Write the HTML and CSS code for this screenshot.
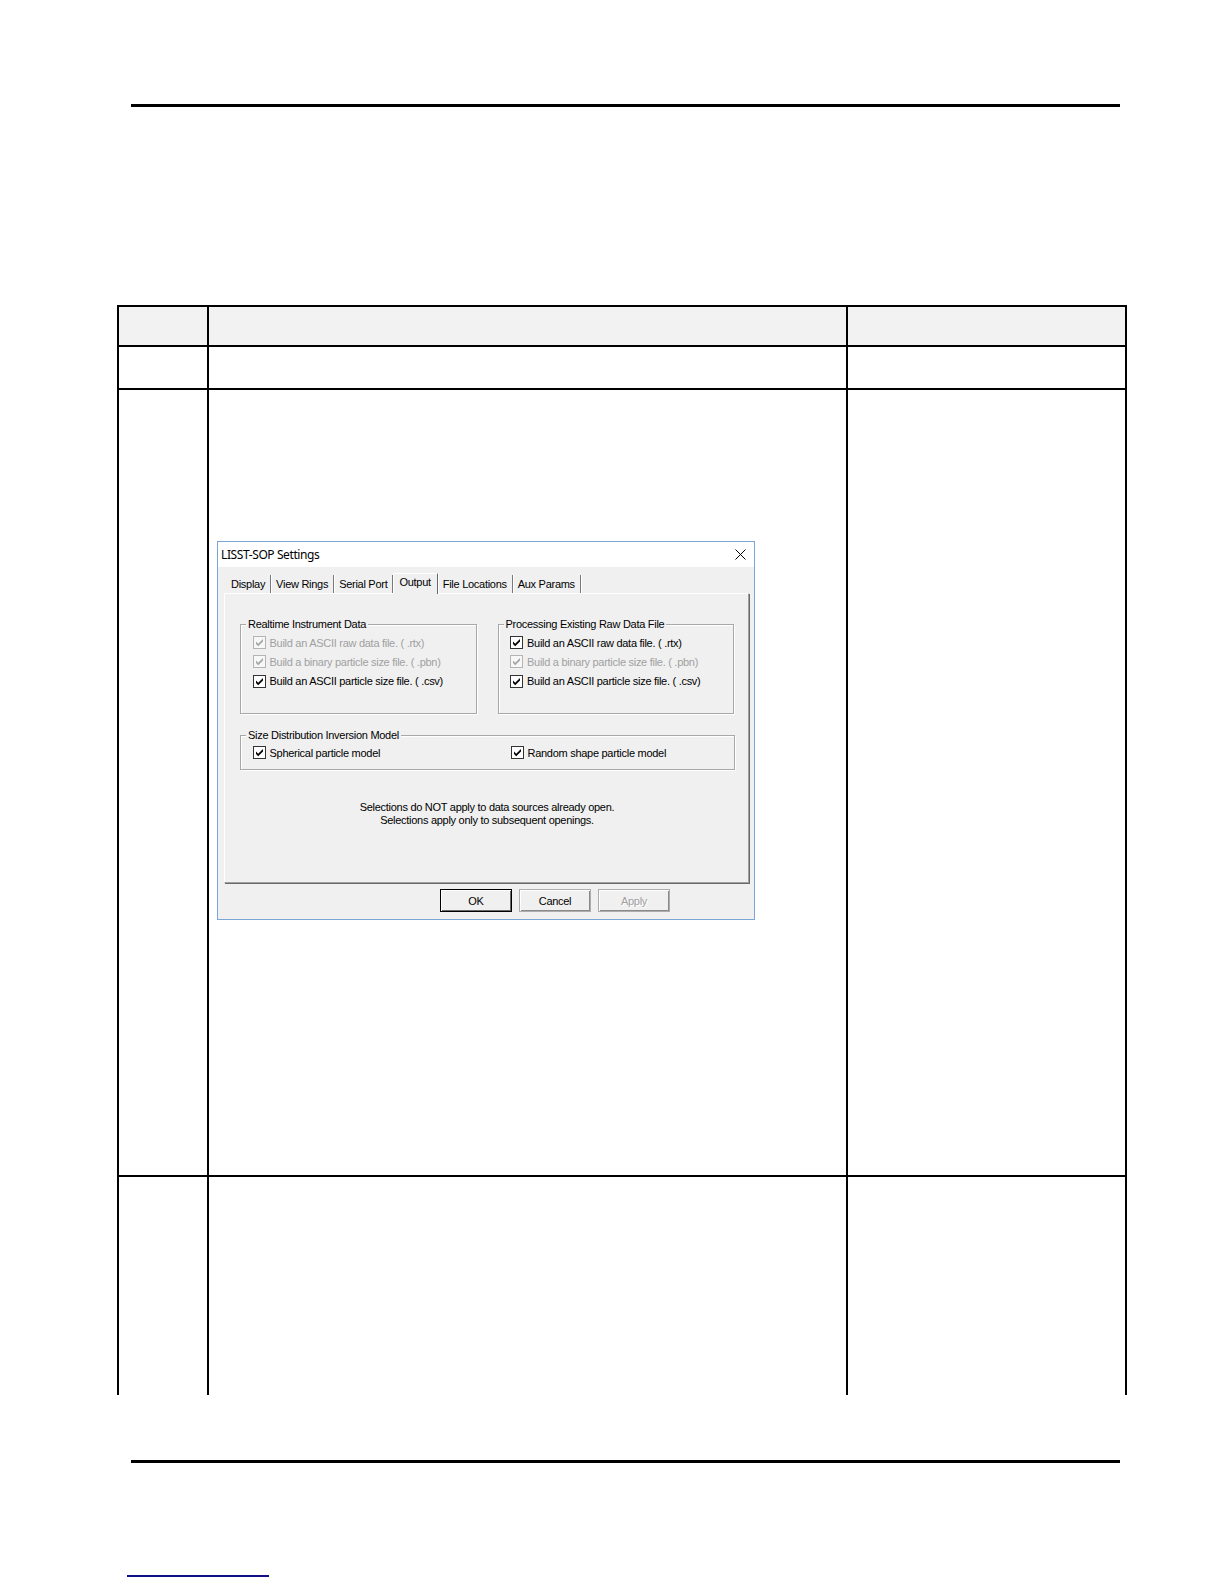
FILE: index.html
```
<!DOCTYPE html>
<html lang="en">
<head>
<meta charset="utf-8">
<title>LISST-SOP Settings – Output tab</title>
<link rel="stylesheet" href="styles.css">
</head>
<body>
<div class="page">
  <div class="rule rule-top"></div>

  <div class="doc-table">
    <div class="cell head"></div><div class="cell head"></div><div class="cell head end"></div>
    <div class="cell"></div><div class="cell"></div><div class="cell end"></div>
    <div class="cell"></div>
    <div class="cell figure-cell">
      <div class="dialog">
        <div class="titlebar">
          <span class="title">LISST-SOP Settings</span>
          <svg class="close" width="11" height="11" viewBox="0 0 11 11"><path d="M0.5 0.5 L10.5 10.5 M10.5 0.5 L0.5 10.5" stroke="#000" stroke-width="1" fill="none"/></svg>
        </div>
        <div class="client">
          <div class="tabs">
            <span class="tab">Display</span>
            <span class="tab">View Rings</span>
            <span class="tab">Serial Port</span>
            <span class="tab active">Output</span>
            <span class="tab">File Locations</span>
            <span class="tab">Aux Params</span>
          </div>
          <div class="panel">
            <div class="group-row">
              <div class="group">
                <div class="legend">Realtime Instrument Data</div>
                <div class="opts">
                  <div class="opt disabled"><svg class="cb" width="13" height="13" viewBox="0 0 13 13"><rect x="0.5" y="0.5" width="12" height="12"/><polygon points="3,5.6 5.2,7.8 10,3 10,5.4 5.2,10.2 3,8"/></svg><span>Build an ASCII raw data file. ( .rtx)</span></div>
                  <div class="opt disabled"><svg class="cb" width="13" height="13" viewBox="0 0 13 13"><rect x="0.5" y="0.5" width="12" height="12"/><polygon points="3,5.6 5.2,7.8 10,3 10,5.4 5.2,10.2 3,8"/></svg><span>Build a binary particle size file. ( .pbn)</span></div>
                  <div class="opt"><svg class="cb" width="13" height="13" viewBox="0 0 13 13"><rect x="0.5" y="0.5" width="12" height="12"/><polygon points="3,5.6 5.2,7.8 10,3 10,5.4 5.2,10.2 3,8"/></svg><span>Build an ASCII particle size file. ( .csv)</span></div>
                </div>
              </div>
              <div class="group">
                <div class="legend">Processing Existing Raw Data File</div>
                <div class="opts">
                  <div class="opt"><svg class="cb" width="13" height="13" viewBox="0 0 13 13"><rect x="0.5" y="0.5" width="12" height="12"/><polygon points="3,5.6 5.2,7.8 10,3 10,5.4 5.2,10.2 3,8"/></svg><span>Build an ASCII raw data file. ( .rtx)</span></div>
                  <div class="opt disabled"><svg class="cb" width="13" height="13" viewBox="0 0 13 13"><rect x="0.5" y="0.5" width="12" height="12"/><polygon points="3,5.6 5.2,7.8 10,3 10,5.4 5.2,10.2 3,8"/></svg><span>Build a binary particle size file. ( .pbn)</span></div>
                  <div class="opt"><svg class="cb" width="13" height="13" viewBox="0 0 13 13"><rect x="0.5" y="0.5" width="12" height="12"/><polygon points="3,5.6 5.2,7.8 10,3 10,5.4 5.2,10.2 3,8"/></svg><span>Build an ASCII particle size file. ( .csv)</span></div>
                </div>
              </div>
            </div>
            <div class="group model">
              <div class="legend">Size Distribution Inversion Model</div>
              <div class="opts model-opts">
                <div class="opt"><svg class="cb" width="13" height="13" viewBox="0 0 13 13"><rect x="0.5" y="0.5" width="12" height="12"/><polygon points="3,5.6 5.2,7.8 10,3 10,5.4 5.2,10.2 3,8"/></svg><span>Spherical particle model</span></div>
                <div class="opt"><svg class="cb" width="13" height="13" viewBox="0 0 13 13"><rect x="0.5" y="0.5" width="12" height="12"/><polygon points="3,5.6 5.2,7.8 10,3 10,5.4 5.2,10.2 3,8"/></svg><span>Random shape particle model</span></div>
              </div>
            </div>
            <p class="note">Selections do NOT apply to data sources already open.<br>Selections apply only to subsequent openings.</p>
          </div>
          <div class="buttons">
            <button class="btn default" type="button">OK</button>
            <button class="btn" type="button">Cancel</button>
            <button class="btn" type="button" disabled>Apply</button>
          </div>
        </div>
      </div>
    </div>
    <div class="cell end"></div>
    <div class="cell last"></div><div class="cell last"></div><div class="cell last end"></div>
  </div>

  <div class="rule rule-bottom"></div>
  <div class="footnote-rule"></div>
</div>
</body>
</html>
```

FILE: styles.css
```
* { box-sizing: border-box; }

html, body {
  margin: 0;
  padding: 0;
  background: #fff;
}

body {
  font-family: "Liberation Sans", Arial, sans-serif;
  color: #000;
}

.page {
  width: 1224px;
  height: 1584px;
  padding-top: 104px;
  overflow: hidden;
}

.rule {
  height: 3px;
  background: #000;
  margin-left: 131px;
  width: 989px;
}

.doc-table {
  margin-top: 198px;
  margin-left: 117px;
  width: 1010px;
  height: 1090px;
  border: 2px solid #000;
  border-bottom: none;
  display: grid;
  grid-template-columns: 90px 639px 1fr;
  grid-template-rows: 40px 43px 787px 1fr;
}

.cell {
  border-right: 2px solid #000;
  border-bottom: 2px solid #000;
}

.cell.end { border-right: none; }
.cell.last { border-bottom: none; }
.cell.head { background: #f2f2f2; }

.figure-cell {
  padding: 151px 0 0 8px;
}

.rule-bottom {
  margin-top: 65px;
}

.footnote-rule {
  margin-top: 112px;
  margin-left: 127px;
  width: 142px;
  height: 1.5px;
  background: #10108a;
}

/* ---------- dialog ---------- */
.dialog {
  width: 538px;
  height: 379px;
  border: 1px solid #79a6d6;
  display: flex;
  flex-direction: column;
  font-family: "Liberation Sans", Arial, sans-serif;
  font-size: 11px;
  letter-spacing: -0.28px;
}

.titlebar {
  height: 25px;
  background: #fff;
  display: flex;
  align-items: center;
  justify-content: space-between;
  padding: 0 8px 0 3px;
}

.title {
  font-family: "Noto Sans", "Open Sans", sans-serif;
  font-size: 12px;
  letter-spacing: -0.4px;
}

.client {
  flex: 1;
  background: #f0f0f0;
  display: flex;
  flex-direction: column;
}

.tabs {
  display: flex;
  align-items: flex-end;
  height: 20px;
  margin: 6px 0 0 7px;
  position: relative;
  z-index: 1;
}

.tab {
  height: 18px;
  line-height: 18px;
  padding: 0 5px 0 5px;
  border-right: 1px solid #7a7a7a;
  box-shadow: 1px 0 0 #fff;
  white-space: nowrap;
}

.tab:first-child { padding-left: 6px; }

.tab.active {
  height: 21px;
  line-height: 17px;
  margin-bottom: -1px;
  padding: 0 6px 0 5px;
  background: #f0f0f0;
  border-top: 1px solid #fff;
  border-left: 1px solid #fff;
  border-right: 1px solid #696969;
}

.panel {
  height: 290px;
  margin: 0 5px 0 6px;
  border-top: 1px solid #fff;
  border-left: 1px solid #fff;
  border-right: 1px solid #a0a0a0;
  border-bottom: 1px solid #a0a0a0;
  box-shadow: 1px 1px 0 #696969;
  padding: 30px 14px 0 15px;
}

.group-row {
  display: flex;
  gap: 21px;
}

.group {
  width: 237px;
  height: 90px;
  border: 1px solid #a8a8a8;
  box-shadow: inset 1px 1px 0 #fff, 1px 1px 0 #fff;
}

.group.model {
  width: 495px;
  height: 35px;
  margin-top: 21px;
}

.legend {
  width: max-content;
  line-height: 14px;
  margin: -8px 0 0 5px;
  padding: 0 2px;
  background: #f0f0f0;
}

.opts {
  padding: 2px 0 0 11.5px;
}

.opt {
  height: 19.3px;
  display: flex;
  align-items: center;
  gap: 4px;
  white-space: nowrap;
}

.model-opts {
  display: grid;
  grid-template-columns: 258px auto;
  padding-top: 1px;
}

.cb { flex: none; }
.cb rect { fill: #fff; stroke: #333; }
.cb polygon { fill: #000; }

.opt.disabled { color: #a0a0a0; }
.opt.disabled .cb rect { fill: #f7f7f7; stroke: #b4b4b4; }
.opt.disabled .cb polygon { fill: #a6a6a6; }

.note {
  margin: 31px 0 0 0;
  text-align: center;
  line-height: 13px;
}

.buttons {
  display: flex;
  justify-content: flex-end;
  gap: 7px;
  margin-top: 6px;
  padding-right: 84px;
}

.btn {
  width: 72px;
  height: 23px;
  padding: 0;
  font-family: "Liberation Sans", Arial, sans-serif;
  font-size: 11px;
  letter-spacing: -0.28px;
  color: #000;
  background: #f0f0f0;
  border: 1px solid #adadad;
  box-shadow: inset 1px 1px 0 #fff, inset -1px -1px 0 #8a8a8a;
}

.btn.default {
  border-color: #000;
  box-shadow: inset 1px 1px 0 #fff, inset -1px -1px 0 #696969;
}

.btn:disabled {
  color: #a0a0a0;
  text-shadow: 1px 1px 0 #fff;
}
```
